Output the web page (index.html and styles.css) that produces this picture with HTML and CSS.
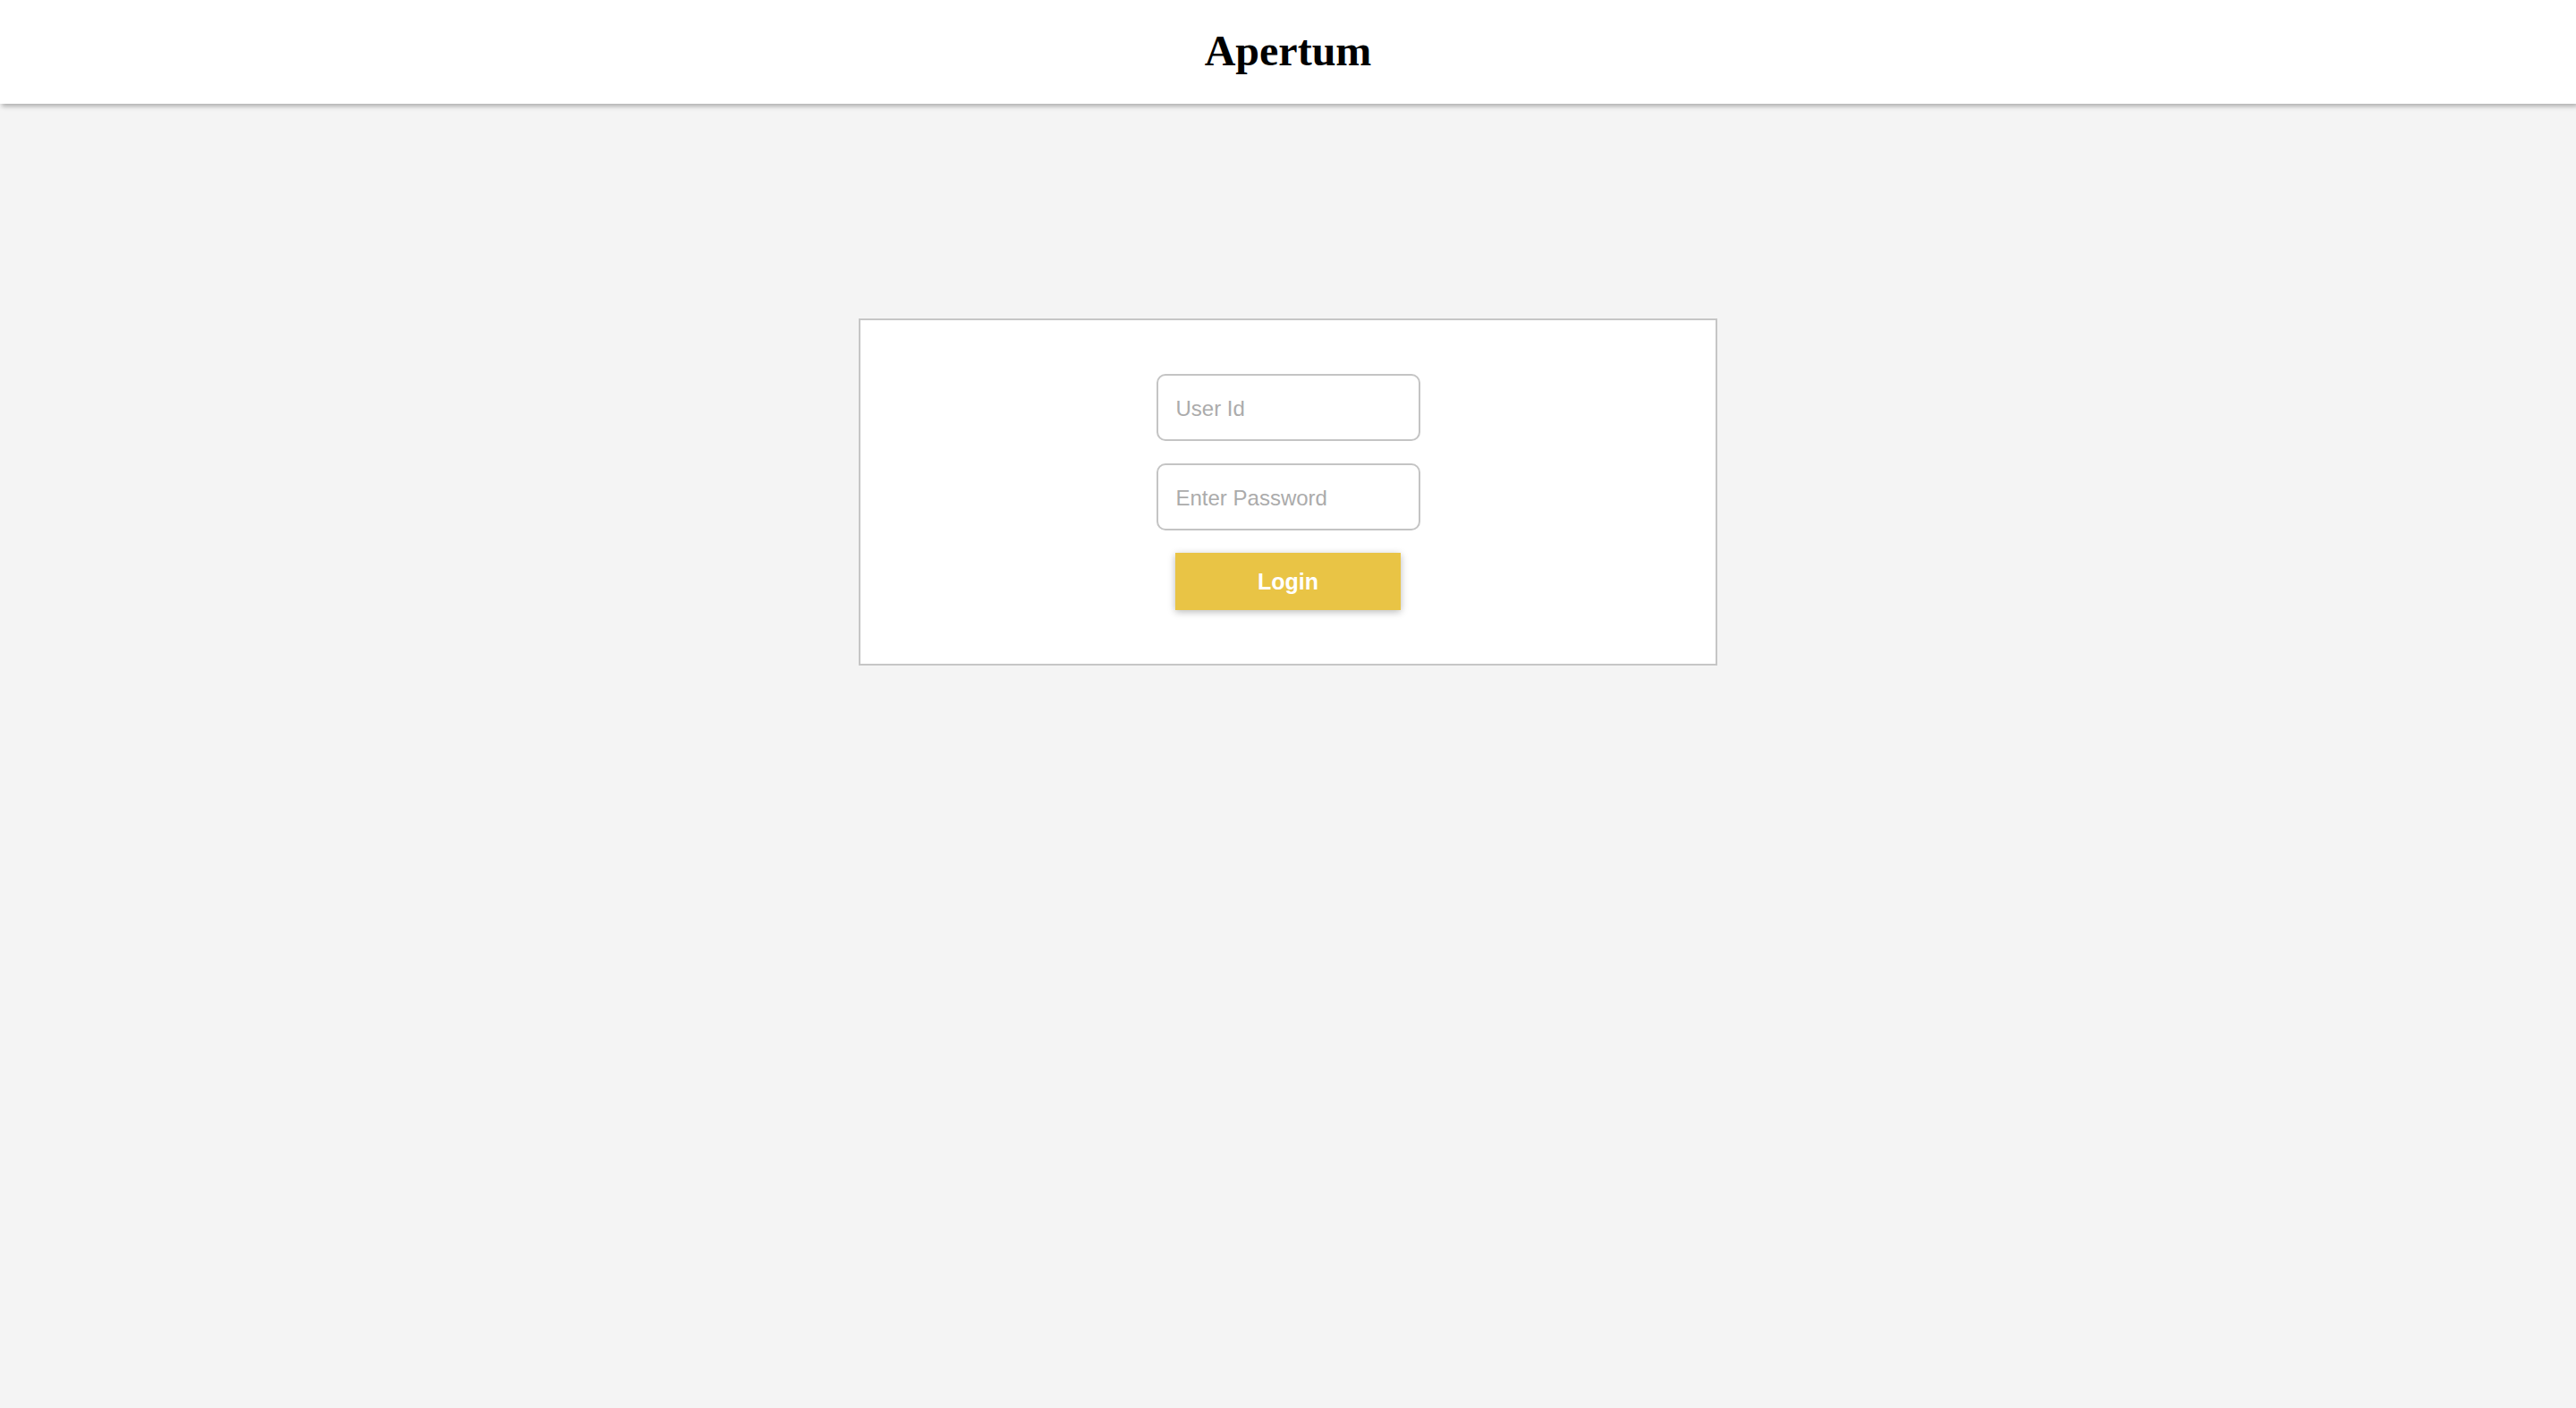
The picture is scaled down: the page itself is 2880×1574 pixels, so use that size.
FILE: index.html
```html
<!DOCTYPE html>
<html lang="en">
<head>
<meta charset="utf-8">
<title>Apertum</title>
<link rel="stylesheet" href="styles.css">
</head>
<body>
<header class="topbar">
  <h1 class="brand">Apertum</h1>
</header>
<main class="main">
  <form class="card" onsubmit="return false;">
    <input class="field" type="text" placeholder="User Id">
    <input class="field" type="password" placeholder="Enter Password">
    <button class="btn" type="submit">Login</button>
  </form>
</main>
</body>
</html>
```

FILE: styles.css
```css
html, body {
  margin: 0;
  padding: 0;
}
body {
  background: #f4f4f4;
  min-height: 1574px;
  font-family: "Liberation Sans", Arial, sans-serif;
}
.topbar {
  height: 116px;
  background: #ffffff;
  box-shadow: 2px 3px 5px rgba(0, 0, 0, 0.28);
  display: flex;
  align-items: center;
  justify-content: center;
  position: relative;
}
.brand {
  margin: 0;
  font-family: "Liberation Serif", "Times New Roman", serif;
  font-weight: bold;
  font-size: 48px;
  line-height: 1;
  color: #000;
  transform: translateY(-1px);
}
.main {
  display: flex;
  justify-content: center;
  padding-top: 240px;
}
.card {
  width: 960px;
  box-sizing: border-box;
  background: #fff;
  border: 2px solid #c6c6c6;
  padding: 60px 0;
  display: flex;
  flex-direction: column;
  align-items: center;
  gap: 25px;
}
.field {
  width: 295px;
  height: 75px;
  box-sizing: border-box;
  border: 2px solid #c4c4c4;
  border-radius: 10px;
  padding: 3px 20px 0;
  font-family: "Liberation Sans", Arial, sans-serif;
  font-size: 24px;
  color: #333;
  background: #fff;
  outline: none;
}
.field::placeholder {
  color: #ababab;
}
.btn {
  width: 252px;
  height: 64px;
  border: none;
  background: #e9c445;
  color: #fff;
  font-family: "Liberation Sans", Arial, sans-serif;
  font-weight: bold;
  font-size: 25px;
  box-shadow: 0 2px 8px rgba(0, 0, 0, 0.28);
  cursor: pointer;
}
```
